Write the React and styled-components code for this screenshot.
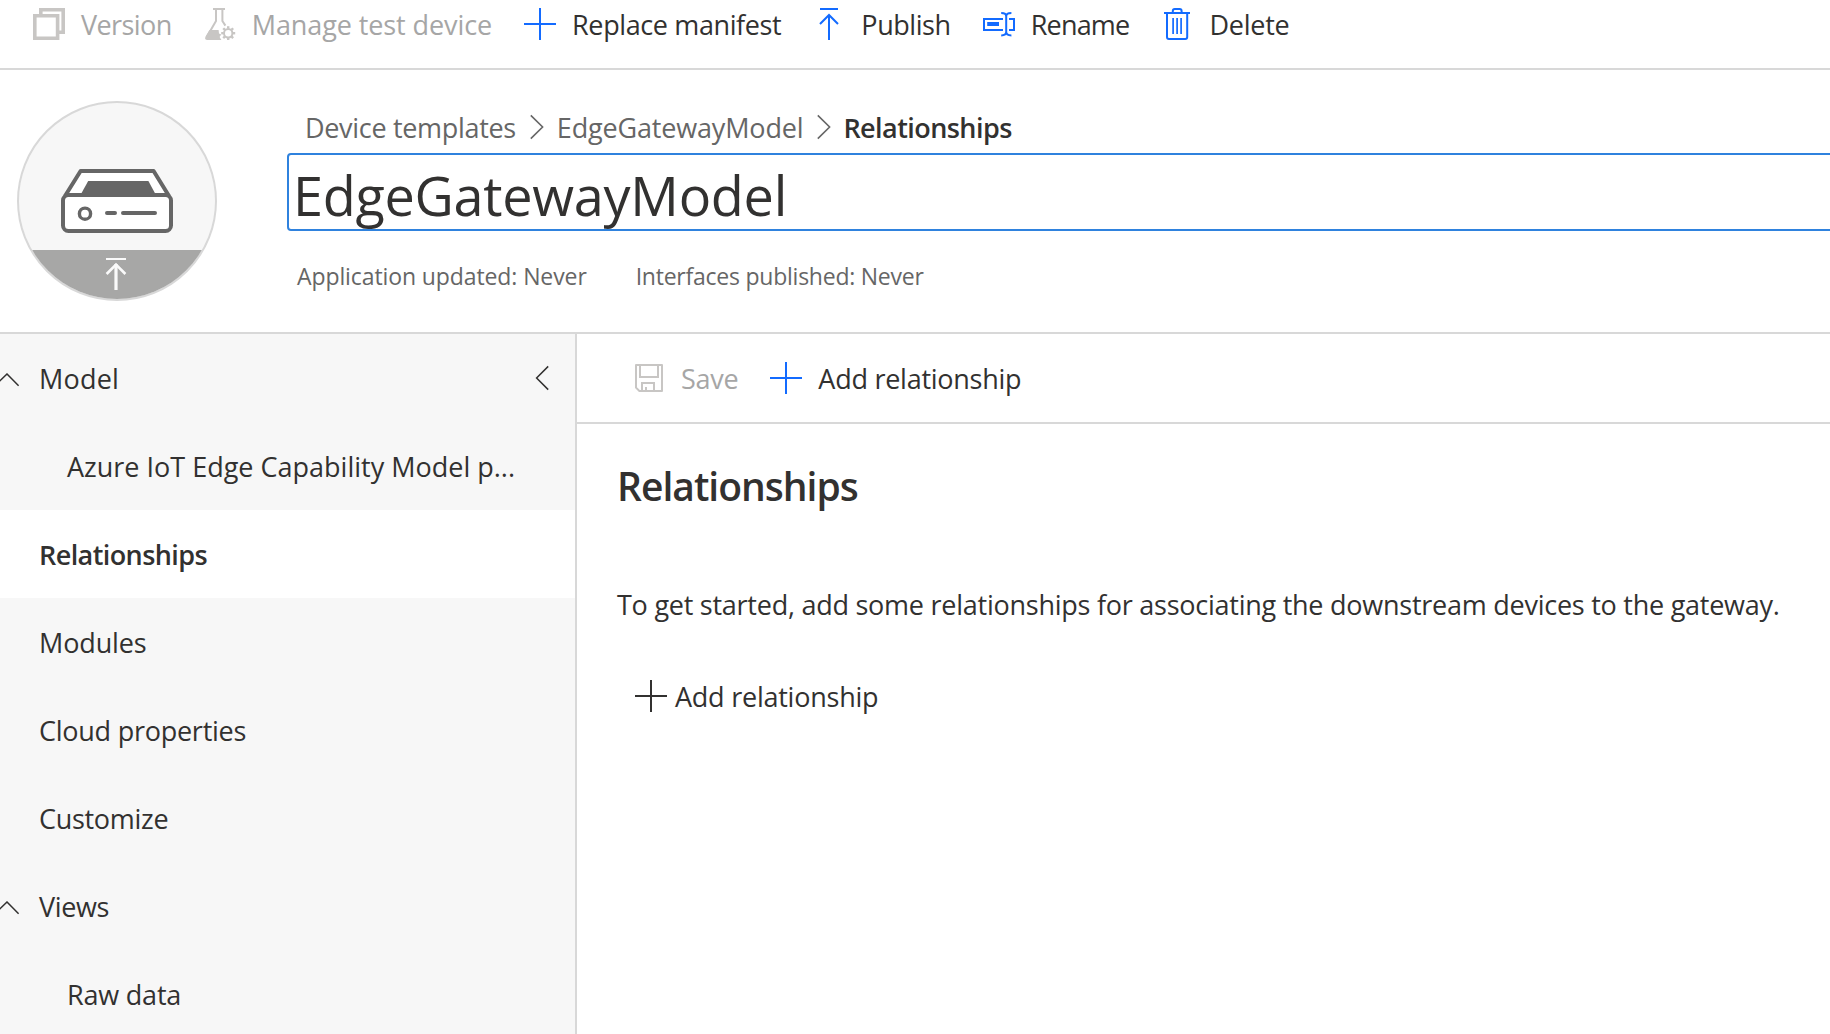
import React from 'react';
import styled, { createGlobalStyle } from 'styled-components';

const INK = '#323130';
const MUTED = '#666666';
const DISABLED = '#a6a6a6';
const DISABLED_ICON = '#c8c6c4';
const BLUE = '#136bff';
const LINE = '#d8d8d8';

const GlobalStyle = createGlobalStyle`
  * { box-sizing: border-box; }
  html, body { margin: 0; height: 100%; background: #fff; overflow: hidden; }
  body {
    font-family: "Open Sans", "Noto Sans", sans-serif;
    font-size: 27px;
    color: ${INK};
  }
  svg { display: block; flex: none; }
  h1, h2, p { margin: 0; font-weight: 400; }
`;

const Page = styled.div`
  display: flex;
  flex-direction: column;
  height: 1034px;
  overflow: hidden;
`;

const CommandBar = styled.div`
  display: flex;
  align-items: center;
  gap: 32px;
  flex: none;
  height: ${p => p.$height}px;
  padding: ${p => p.$padding};
  border-bottom: 2px solid ${LINE};
`;

const Command = styled.button`
  display: flex;
  align-items: center;
  gap: ${p => p.$gap || 16}px;
  height: 32px;
  padding: 0;
  border: 0;
  background: none;
  font: inherit;
  line-height: 32px;
  white-space: nowrap;
  color: ${p => (p.disabled ? DISABLED : INK)};

  svg { color: ${p => (p.$dark ? INK : p.disabled ? DISABLED_ICON : BLUE)}; }
`;

const Label = styled.span`
  padding-top: 2px;
  letter-spacing: ${p => p.$track || 0}px;
`;

const Header = styled.header`
  display: flex;
  flex: none;
  height: 264px;
  padding: 31px 0 0 17px;
  border-bottom: 2px solid ${LINE};
`;

const Avatar = styled.div`
  display: flex;
  flex-direction: column;
  flex: none;
  width: 200px;
  height: 200px;
  border: 2px solid ${LINE};
  border-radius: 50%;
  overflow: hidden;
  background: #f7f7f7;
`;

const AvatarArt = styled.div`
  display: flex;
  justify-content: center;
  height: 147px;
  padding-top: 66px;
`;

const AvatarBand = styled.div`
  display: flex;
  justify-content: center;
  flex: 1;
  padding: 8px 2px 0 0;
  background: #a7a7a6;
`;

const Heading = styled.div`
  flex: 1;
  min-width: 0;
  padding: 8px 0 0 70px;
`;

const Crumbs = styled.nav`
  display: flex;
  align-items: center;
  height: 36px;
  padding-left: 18px;
  line-height: 36px;
  color: ${MUTED};

  svg { margin: 0 13px 0 14px; }
`;

const CurrentCrumb = styled(Label)`
  margin-left: -1px;
  font-weight: 600;
  color: ${INK};
`;

const Title = styled.h1`
  width: 1560px;
  height: 78px;
  margin-top: 8px;
  padding: 5px 0 0 4px;
  border: 2px solid #2f82de;
  border-radius: 4px;
  font-size: 54px;
  line-height: 70px;
  letter-spacing: -0.28px;
`;

const Meta = styled.div`
  display: flex;
  gap: 49px;
  margin-top: 27px;
  padding-left: 10px;
  font-size: 23px;
  line-height: 32px;
  color: ${MUTED};
`;

const Body = styled.div`
  display: flex;
  flex: 1;
  min-height: 0;
`;

const Sidebar = styled.nav`
  flex: none;
  width: 577px;
  border-right: 2px solid ${LINE};
  background: #f7f7f7;
  overflow: hidden;
`;

const NavRow = styled.div`
  display: flex;
  align-items: center;
  height: 88px;
  padding: 0 26px 0 ${p => (p.$nested ? 67 : p.$group ? 0 : 39)}px;
  line-height: 88px;
  white-space: nowrap;
  font-weight: ${p => (p.$active ? 600 : 400)};
  background: ${p => (p.$active ? '#fff' : 'transparent')};

  ${Label} { flex: 1; }
`;

const GroupMark = styled.span`
  display: flex;
  flex: none;
  width: 39px;
  padding-top: 4px;
`;

const Main = styled.main`
  flex: 1;
  min-width: 0;
`;

const Content = styled.section`
  padding: 37px 0 0 40px;
`;

const SectionTitle = styled.h2`
  font-size: 39px;
  font-weight: 600;
  line-height: 50px;
  letter-spacing: -1.0px;
`;

const Intro = styled.p`
  margin-top: 76px;
  line-height: 36px;
  letter-spacing: -0.25px;
  white-space: nowrap;
`;

const InlineAction = styled.div`
  margin-top: 57px;
  padding-left: 18px;
`;

const Icon = ({ children, w = 32, h = 32, ...rest }) => (
  <svg width={w} height={h} viewBox={`0 0 ${w} ${h}`} fill="none" stroke="currentColor" strokeWidth="2" {...rest}>
    {children}
  </svg>
);

const VersionIcon = () => (
  <Icon strokeWidth="3.6">
    <path d="M1.8 7.8H24.6V30.2H1.8Z" />
    <path d="M7.8 7V1.8H30.2V24.2H25" strokeWidth="3.6" />
  </Icon>
);

const FlaskIcon = () => (
  <Icon>
    <path d="M9 1H21" />
    <path d="M12 1V13L2.6 29.2M18.4 1V13L21.4 17.6" strokeWidth="2" />
    <path d="M5.4 22H14.6L15 25.4L17.2 26.6L15.6 29L17.4 32H3.4C1.2 32 .5 30.6 1.6 28.6Z" fill="currentColor" stroke="none" />
    <circle cx="24.2" cy="25.2" r="4.2" />
    <g strokeWidth="2.4">
      {[0, 45, 90, 135, 180, 225, 270, 315].map(a => (
        <path key={a} d="M24.2 20.6V18.2" transform={`rotate(${a} 24.2 25.2)`} />
      ))}
    </g>
  </Icon>
);

const PlusIcon = () => (
  <Icon>
    <path d="M0 16H32M16 0V32" />
  </Icon>
);

const PublishIcon = () => (
  <Icon>
    <path d="M7 1H25" />
    <path d="M16 32V7" />
    <path d="M7 16L16 7L25 16" />
  </Icon>
);

const RenameIcon = () => (
  <Icon>
    <path d="M20 11H1V22H20" />
    <path d="M26 11H31V22H26" />
    <path d="M4.2 16H16" strokeWidth="4" />
    <path d="M18.2 5C21.4 5 23.2 6 23.2 8.4V24C23.2 26.4 21.4 27.4 18.2 27.4M28.4 5C25.2 5 23.2 6 23.2 8.4M23.2 24C23.2 26.4 25.2 27.4 28.4 27.4" />
  </Icon>
);

const DeleteIcon = () => (
  <Icon>
    <path d="M3 5H29" />
    <path d="M11.8 5V3Q11.8 1 13.8 1H18.6Q20.6 1 20.6 3V5" />
    <path d="M6 5V29Q6 31 8 31H24.2Q26.2 31 26.2 29V5" />
    <path d="M12.1 10V26M16.1 10V26M20.1 10V26" strokeWidth="1.7" />
  </Icon>
);

const SaveIcon = () => (
  <Icon>
    <path d="M3 3H29V29H6.4L3 25.6Z" strokeLinejoin="round" />
    <path d="M7 3V15H25V3" />
    <path d="M9 29V21H21V29M13 29V25" />
  </Icon>
);

const CrumbChevron = () => (
  <Icon w={14} h={26} strokeWidth="1.6">
    <path d="M.8 1.4L12.6 13L.8 24.6" />
  </Icon>
);

const CollapseChevron = () => (
  <Icon w={14} h={26} strokeWidth="1.5">
    <path d="M13.2 1.4L1.6 13L13.2 24.6" />
  </Icon>
);

const GroupChevron = () => (
  <Icon w={20} h={14} strokeWidth="1.5">
    <path d="M-5 12.7L7 1L18.6 12.7" />
  </Icon>
);

const GatewayIcon = () => (
  <Icon w={112} h={64} stroke="#666" strokeWidth="4">
    <path d="M4 27L19.6 2H92.6L108 27" fill="#fff" strokeLinejoin="round" />
    <path d="M20 25L27.2 12H87.4L94.4 25Z" fill="#666" stroke="none" />
    <rect x="2" y="26" width="108" height="36" rx="5.5" fill="#fff" />
    <circle cx="24" cy="44.7" r="5.6" strokeWidth="3.4" />
    <path d="M46 44H54M62 44H94" strokeLinecap="round" />
  </Icon>
);

const UploadIcon = () => (
  <Icon w={22} h={34} stroke="#fafafa" strokeWidth="2.6">
    <path d="M1 1H21" strokeWidth="2" />
    <path d="M11 32V6" strokeWidth="3.2" />
    <path d="M1.6 16L11 6.6L20.4 16" />
  </Icon>
);

const commands = [
  { label: 'Version', icon: VersionIcon, track: -0.58, disabled: true },
  { label: 'Manage test device', icon: FlaskIcon, track: -0.094, disabled: true },
  { label: 'Replace manifest', icon: PlusIcon, track: -0.384 },
  { label: 'Publish', icon: PublishIcon, track: -0.436 },
  { label: 'Rename', icon: RenameIcon, track: -0.8 },
  { label: 'Delete', icon: DeleteIcon, track: -0.25 },
];

const navigation = [
  { label: 'Model', group: true, collapse: true, track: 0.2 },
  { label: 'Azure IoT Edge Capability Model p...', nested: true, track: 0 },
  { label: 'Relationships', active: true, track: -0.58 },
  { label: 'Modules', track: -0.12 },
  { label: 'Cloud properties', track: -0.251 },
  { label: 'Customize', track: -0.296 },
  { label: 'Views', group: true, track: -0.374 },
  { label: 'Raw data', nested: true, track: -0.2 },
];

export default function App() {
  return (
    <Page>
      <GlobalStyle />
      <CommandBar $height={70} $padding="0 0 20px 33px">
        {commands.map(({ label, icon: Glyph, track, disabled }) => (
          <Command key={label} disabled={disabled}>
            <Glyph />
            <Label $track={track}>{label}</Label>
          </Command>
        ))}
      </CommandBar>

      <Header>
        <Avatar>
          <AvatarArt><GatewayIcon /></AvatarArt>
          <AvatarBand><UploadIcon /></AvatarBand>
        </Avatar>
        <Heading>
          <Crumbs>
            <Label $track={-0.318}>Device templates</Label>
            <CrumbChevron />
            <Label $track={-0.17}>EdgeGatewayModel</Label>
            <CrumbChevron />
            <CurrentCrumb $track={-0.56}>Relationships</CurrentCrumb>
          </Crumbs>
          <Title>EdgeGatewayModel</Title>
          <Meta>
            <Label $track={-0.1}>Application updated: Never</Label>
            <Label $track={-0.24}>Interfaces published: Never</Label>
          </Meta>
        </Heading>
      </Header>

      <Body>
        <Sidebar>
          {navigation.map(item => (
            <NavRow key={item.label} $nested={item.nested} $group={item.group} $active={item.active}>
              {item.group && <GroupMark><GroupChevron /></GroupMark>}
              <Label $track={item.track}>{item.label}</Label>
              {item.collapse && <CollapseChevron />}
            </NavRow>
          ))}
        </Sidebar>
        <Main>
          <CommandBar $height={90} $padding="0 0 0 56px">
            <Command disabled>
              <SaveIcon />
              <Label $track={-0.28}>Save</Label>
            </Command>
            <Command>
              <PlusIcon />
              <Label $track={-0.26}>Add relationship</Label>
            </Command>
          </CommandBar>
          <Content>
            <SectionTitle>Relationships</SectionTitle>
            <Intro>To get started, add some relationships for associating the downstream devices to the gateway.</Intro>
            <InlineAction>
              <Command $gap={8} $dark>
                <PlusIcon />
                <Label $track={-0.24}>Add relationship</Label>
              </Command>
            </InlineAction>
          </Content>
        </Main>
      </Body>
    </Page>
  );
}
